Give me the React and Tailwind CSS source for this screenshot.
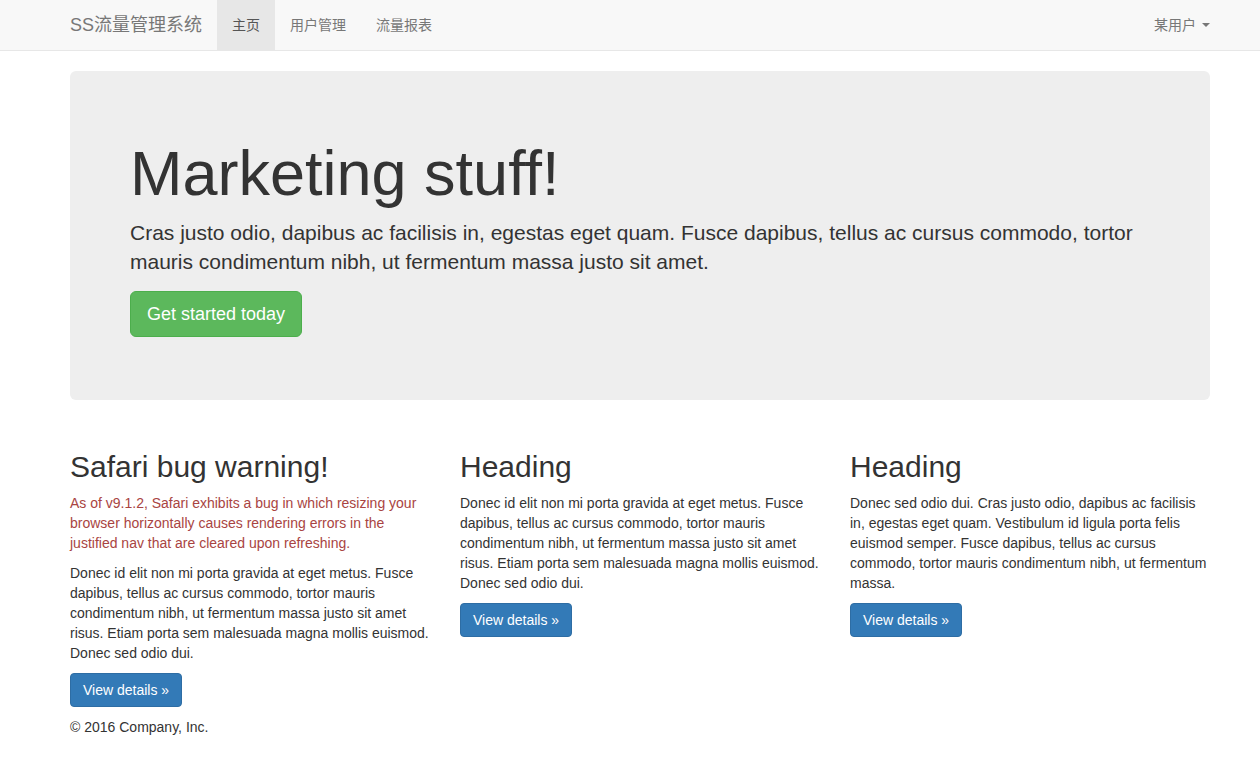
export default function App() {
  const font = { fontFamily: '"Liberation Sans", Arial, "Noto Sans CJK SC", sans-serif' };
  return (
    <div className="min-h-[759px] bg-white text-[14px] leading-[20px] text-[#333]" style={font}>
      <nav className="h-[51px] bg-[#f8f8f8] border-b border-[#e7e7e7]">
        <div className="w-[1140px] ml-[70px] flex h-[50px]">
          <a className="-ml-[15px] px-[15px] py-[15px] h-[50px] text-[18px] leading-[20px] text-[#777]">SS流量管理系统</a>
          <ul className="flex">
            <li className="px-[15px] py-[15px] bg-[#e7e7e7] text-[#555]">主页</li>
            <li className="px-[15px] py-[15px] text-[#777]">用户管理</li>
            <li className="px-[15px] py-[15px] text-[#777]">流量报表</li>
          </ul>
          <div className="ml-auto -mr-[15px] px-[15px] py-[15px] text-[#777] flex items-center">
            某用户
            <span className="ml-[6px] inline-block w-0 h-0 border-l-[4px] border-r-[4px] border-t-[4px] border-l-transparent border-r-transparent border-t-[#777]"></span>
          </div>
        </div>
      </nav>
      <div className="w-[1140px] ml-[70px]">
        <div className="mt-[20px] mb-[30px] bg-[#eeeeee] rounded-[6px] px-[60px] py-[48px]">
          <h1 className="mt-[20px] mb-[10px] text-[63px] leading-[69px] font-medium">Marketing stuff!</h1>
          <p className="mb-[15px] text-[21px] leading-[29px] font-normal">
            Cras justo odio, dapibus ac facilisis in, egestas eget quam. Fusce dapibus, tellus ac cursus commodo, tortor mauris condimentum nibh, ut fermentum massa justo sit amet.
          </p>
          <p className="mb-[15px]">
            <a className="inline-block px-[16px] py-[10px] text-[18px] leading-[24px] text-white bg-[#5cb85c] border border-[#4cae4c] rounded-[6px]">Get started today</a>
          </p>
        </div>
        <div className="grid grid-cols-3 gap-[30px]">
          <div>
            <h2 className="mt-[20px] mb-[10px] text-[30px] leading-[33px] font-medium">Safari bug warning!</h2>
            <p className="mb-[10px] text-[#a94442]">As of v9.1.2, Safari exhibits a bug in which resizing your browser horizontally causes rendering errors in the justified nav that are cleared upon refreshing.</p>
            <p className="mb-[10px]">Donec id elit non mi porta gravida at eget metus. Fusce dapibus, tellus ac cursus commodo, tortor mauris condimentum nibh, ut fermentum massa justo sit amet risus. Etiam porta sem malesuada magna mollis euismod. Donec sed odio dui.</p>
            <p className="mb-[10px]">
              <a className="inline-block px-[12px] py-[6px] leading-[20px] text-white bg-[#337ab7] border border-[#2e6da4] rounded-[4px]">View details »</a>
            </p>
          </div>
          <div>
            <h2 className="mt-[20px] mb-[10px] text-[30px] leading-[33px] font-medium">Heading</h2>
            <p className="mb-[10px]">Donec id elit non mi porta gravida at eget metus. Fusce dapibus, tellus ac cursus commodo, tortor mauris condimentum nibh, ut fermentum massa justo sit amet risus. Etiam porta sem malesuada magna mollis euismod. Donec sed odio dui.</p>
            <p className="mb-[10px]">
              <a className="inline-block px-[12px] py-[6px] leading-[20px] text-white bg-[#337ab7] border border-[#2e6da4] rounded-[4px]">View details »</a>
            </p>
          </div>
          <div>
            <h2 className="mt-[20px] mb-[10px] text-[30px] leading-[33px] font-medium">Heading</h2>
            <p className="mb-[10px]">Donec sed odio dui. Cras justo odio, dapibus ac facilisis in, egestas eget quam. Vestibulum id ligula porta felis euismod semper. Fusce dapibus, tellus ac cursus commodo, tortor mauris condimentum nibh, ut fermentum massa.</p>
            <p className="mb-[10px]">
              <a className="inline-block px-[12px] py-[6px] leading-[20px] text-white bg-[#337ab7] border border-[#2e6da4] rounded-[4px]">View details »</a>
            </p>
          </div>
        </div>
        <footer>
          <p>© 2016 Company, Inc.</p>
        </footer>
      </div>
    </div>
  );
}
